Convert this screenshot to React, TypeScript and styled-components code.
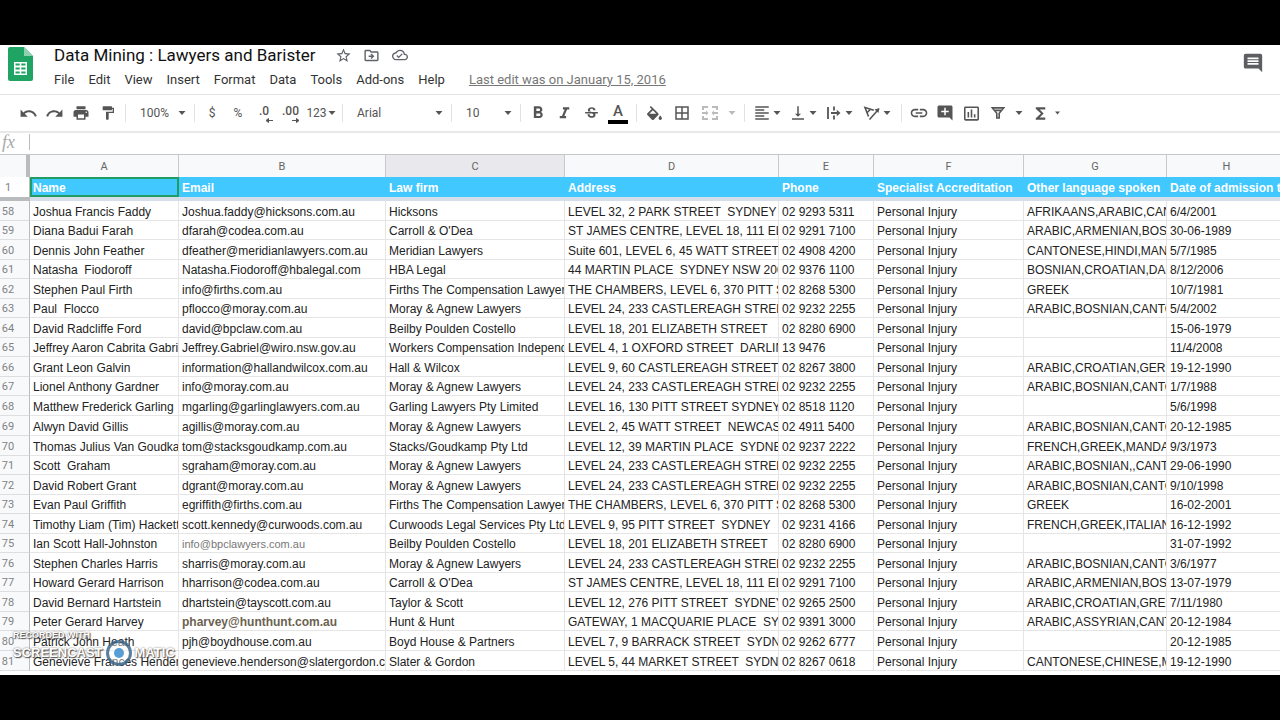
import React from "react";
import styled, { createGlobalStyle } from "styled-components";
import {
  MdUndo, MdRedo, MdPrint, MdFormatPaint, MdFormatBold, MdFormatItalic, MdStrikethroughS,
  MdBorderAll, MdFormatAlignLeft, MdVerticalAlignBottom, MdInsertLink, MdAddComment,
  MdInsertChartOutlined, MdFunctions, MdComment, MdStarBorder, MdOutlineDriveFileMove, MdOutlineCloudDone,
} from "react-icons/md";

const Global = createGlobalStyle`
  * { box-sizing: border-box; }
  body { margin: 0; background: #000; font-family: Roboto, "Liberation Sans", sans-serif; }
  button, select, input { font: inherit; color: inherit; border: 0; background: none; padding: 0; margin: 0; outline: none; }
`;

const Page = styled.div`
  min-height: 100vh;
  display: flex;
  flex-direction: column;
  padding: 45px 0;
  background: #000;
`;

const Workspace = styled.main`
  flex: 1;
  display: flex;
  flex-direction: column;
  background: #fff;
  overflow: hidden;
  position: relative;
`;

const Header = styled.header`
  display: flex;
  align-items: flex-start;
  height: 50px;
  padding: 0 16px 0 8px;
  border-bottom: 1px solid #e2e3e6;
`;

const Logo = styled.svg`
  width: 25px;
  height: 34px;
  margin-top: 2px;
  flex: none;
`;

const HeaderMain = styled.div`
  flex: 1;
  margin-left: 21px;
`;

const TitleRow = styled.div`
  display: flex;
  align-items: center;
  height: 20px;
  color: #5f6368;
`;

const Title = styled.h1`
  margin: 0 19px 0 0;
  font: 400 17px/20px Roboto, sans-serif;
  color: #111;
`;

const TitleButton = styled.button`
  display: flex;
  width: 18px;
  height: 18px;
  margin-right: 10px;
  align-items: center;
  justify-content: center;
`;

const Menu = styled.nav`
  display: flex;
  align-items: center;
  gap: 14px;
  height: 28px;
  font-size: 13px;
  color: #333;
`;

const LastEdit = styled.a`
  margin-left: 10px;
  color: #777;
  text-decoration: underline;
`;

const CommentButton = styled.button`
  display: flex;
  margin-top: 7px;
  color: #5c5e61;
`;

const Toolbar = styled.div`
  display: flex;
  align-items: center;
  height: 38px;
  padding-left: 15px;
  border-bottom: 2px solid #e9e9e9;
  color: #555;
  font-size: 12px;
`;

const Tool = styled.button<{ $w?: number; $dim?: boolean }>`
  display: flex;
  flex: none;
  align-items: center;
  justify-content: center;
  gap: 1px;
  width: ${(p) => p.$w ?? 26}px;
  height: 30px;
  color: ${(p) => (p.$dim ? "#bbb" : "inherit")};
`;

const DropTool = styled(Tool)`
  justify-content: flex-start;
  gap: 2px;
  padding-left: 4px;
`;

const Divider = styled.span`
  flex: none;
  width: 1px;
  height: 18px;
  margin: 0 4px;
  background: #e2e2e2;
`;

const Picker = styled.label<{ $w: number }>`
  position: relative;
  flex: none;
  width: ${(p) => p.$w}px;

  select {
    width: 100%;
    height: 30px;
    padding-left: 10px;
    appearance: none;
  }
  svg {
    position: absolute;
    right: 4px;
    top: 13px;
    pointer-events: none;
  }
`;

const Decimal = styled(Tool)`
  flex-direction: column;
  gap: 0;
  line-height: 14px;
  font-weight: 500;
  svg { margin-left: 10px; }
`;

const TextColor = styled(Tool)`
  flex-direction: column;
  gap: 0;
  font: 500 15px/17px Roboto, sans-serif;
  &::after {
    content: "";
    width: 20px;
    height: 4px;
    background: #000;
  }
`;

const FormulaBar = styled.label`
  display: flex;
  align-items: center;
  height: 21px;
  padding-bottom: 3px;
  font: italic 18px/18px "Liberation Serif", serif;
  color: #aaa;

  span { width: 29px; padding-left: 2px; }
  input {
    flex: 1;
    height: 16px;
    padding-left: 6px;
    border-left: 1px solid #bbb;
    font: 12px "Liberation Sans", Arial, sans-serif;
    color: #222;
  }
`;

const Sheet = styled.div`
  flex: 1;
  overflow: hidden;
  border-top: 1px solid #c4c6c8;
`;

const Grid = styled.table`
  width: 100%;
  min-width: 1287px;
  table-layout: fixed;
  border-collapse: separate;
  border-spacing: 0;
  font: 12px/16px "Liberation Sans", Arial, sans-serif;
  color: #222;

  tbody tr { height: 20px; }
  tbody tr:nth-child(even) { height: 19px; }
  tbody tr:nth-child(12n) { height: 20px; }
`;

const Letter = styled.th<{ $hover?: boolean }>`
  height: 22px;
  padding: 2px 0 0;
  border-right: 1px solid #c8cacc;
  background: ${(p) => (p.$hover ? "#e8e8ed" : "#f8f9fa")};
  font: 400 11px/18px Roboto, sans-serif;
  color: #666;
`;

const Corner = styled.td`
  padding: 0;
  border-right: 4px solid #b9bbbd;
  background: #f8f9fa;
`;

const RowNumber = styled.th<{ $frozen?: boolean }>`
  padding: 2px 13px 0 0;
  border-right: 1px solid #b9bbbd;
  border-bottom: ${(p) => (p.$frozen ? "4px solid #b9bbbd" : "1px solid #dcdee0")};
  background: ${(p) => (p.$frozen ? "#fff" : "#f8f9fa")};
  font: 400 11px/16px Roboto, sans-serif;
  color: #808386;
`;

const FieldName = styled.th<{ $active?: boolean }>`
  height: 24px;
  padding: 2px 3px 0;
  border-bottom: 4px solid #d6deea;
  background: #40c8ff;
  box-shadow: ${(p) => (p.$active ? "inset 0 0 0 2px #1f9d62" : "none")};
  font-weight: 700;
  text-align: left;
  white-space: nowrap;
  overflow: hidden;
  color: #fff;
`;

const Cell = styled.td<{ $look?: "faded" | "strong" }>`
  padding: 2px 0 0 3px;
  border-right: 1px solid #e5e5e5;
  border-bottom: 1px solid #e5e5e5;
  white-space: pre;
  overflow: hidden;
  font-size: ${(p) => (p.$look === "faded" ? 11 : 12)}px;
  font-weight: ${(p) => (p.$look === "strong" ? 700 : 400)};
  color: ${(p) => (p.$look === "faded" ? "#777" : p.$look === "strong" ? "#6b6250" : "inherit")};
`;

const Watermark = styled.div`
  position: absolute;
  left: 13px;
  bottom: 8px;
  opacity: 0.85;
  color: #fff;
  font-family: "Liberation Sans", Arial, sans-serif;
  font-weight: 700;
  text-shadow: 1px 1px 1px #333, 0 0 2px #555;
`;

const WatermarkTop = styled.div`
  font-size: 9px;
  line-height: 8px;
`;

const WatermarkName = styled.div`
  display: flex;
  align-items: center;
  gap: 2px;
  font-size: 13px;
  line-height: 28px;
`;

const Caret = ({ small }: { small?: boolean }) => (
  <svg width={8} height={4} viewBox="0 0 8 4" fill="currentColor" aria-hidden="true">
    <path d={small ? "M2 0.5h5L4.500 3.500z" : "M0.500 0h7L4 4z"} />
  </svg>
);

const Arrow = ({ right }: { right?: boolean }) => (
  <svg width={8} height={5} viewBox="0 0 8 5" aria-hidden="true">
    <path d={right ? "M0 2.500h6M4.500 0.500l2.500 2-2.500 2z" : "M8 2.500H2M3.500 0.500L1 2.500l2.500 2z"} fill="currentColor" stroke="currentColor" />
  </svg>
);

const FillIcon = () => (
  <svg width={15} height={14} viewBox="3 0 18 17" fill="currentColor" aria-hidden="true">
    <path d="M16.560 8.940L7.620 0 6.210 1.410l2.380 2.380-5.150 5.150a1.490 1.490 0 0 0 0 2.120l5.500 5.500c.29.29.68.44 1.060.44s.77-.15 1.060-.44l5.500-5.500c.59-.58.59-1.530 0-2.120zM5.800 9.400L10 5.210l4.200 4.190zM19 11.500s-2 2.170-2 3.500c0 1.100.9 2 2 2s2-.9 2-2c0-1.330-2-3.500-2-3.500z" />
  </svg>
);

const MergeIcon = () => (
  <svg width={16} height={14} viewBox="0 0 16 14" fill="none" stroke="currentColor" strokeWidth={2} aria-hidden="true">
    <path d="M1 4V1h5M10 1h5v3M1 10v3h5M10 13h5v-3M0 7h5M11 7h5" />
    <path d="M4 4.500L6.500 7 4 9.500zM12 4.500L9.500 7 12 9.500z" fill="currentColor" stroke="none" />
  </svg>
);

const OverflowIcon = () => (
  <svg width={18} height={18} viewBox="0 0 18 18" fill="none" stroke="currentColor" strokeWidth={1.8} aria-hidden="true">
    <path d="M3 3v12M9 2.500v4M9 11.500v4M6 9h7" />
    <path d="M11.800 5.800L15.500 9l-3.700 3.200z" fill="currentColor" stroke="none" />
  </svg>
);

const RotateIcon = () => (
  <svg width={18} height={18} viewBox="0 0 18 18" fill="none" stroke="currentColor" strokeWidth={1.6} aria-hidden="true">
    <path d="M6.500 15.500L14.500 6.500" />
    <path d="M11.500 5.500L16.500 4l-1 5z" fill="currentColor" stroke="none" />
    <path d="M5.500 12.500L2 3.500l8.800 2.800M4 8.800L7.500 5.200" />
  </svg>
);

const FilterIcon = () => (
  <svg width={14} height={12} viewBox="0 0 14 12" fill="none" stroke="currentColor" strokeWidth={1.6} aria-hidden="true">
    <path d="M1.300 0.900h11.400L8.200 6.300V11H5.800V6.300zM3.500 3.400h7" />
  </svg>
);

const fields = ["Name", "Email", "Law firm", "Address", "Phone", "Specialist Accreditation", "Other language spoken", "Date of admission to practice"];
const widths = [30, 149, 207, 179, 214, 95, 150, 143];

const castlereagh = "LEVEL 24, 233 CASTLEREAGH STREET  SYDNEY";
const stJames = "ST JAMES CENTRE, LEVEL 18, 111 ELIZABETH STREET";
const chambers = "THE CHAMBERS, LEVEL 6, 370 PITT STREET";
const bosnian = "ARABIC,BOSNIAN,CANTONESE";

const people: string[][] = [
  ["Joshua Francis Faddy", "Joshua.faddy@hicksons.com.au", "Hicksons", "LEVEL 32, 2 PARK STREET  SYDNEY NSW", "02 9293 5311", "AFRIKAANS,ARABIC,CANTONESE", "6/4/2001"],
  ["Diana Badui Farah", "dfarah@codea.com.au", "Carroll & O'Dea", stJames, "02 9291 7100", "ARABIC,ARMENIAN,BOSNIAN", "30-06-1989"],
  ["Dennis John Feather", "dfeather@meridianlawyers.com.au", "Meridian Lawyers", "Suite 601, LEVEL 6, 45 WATT STREET", "02 4908 4200", "CANTONESE,HINDI,MANDARIN", "5/7/1985"],
  ["Natasha  Fiodoroff", "Natasha.Fiodoroff@hbalegal.com", "HBA Legal", "44 MARTIN PLACE  SYDNEY NSW 2000", "02 9376 1100", "BOSNIAN,CROATIAN,DARI", "8/12/2006"],
  ["Stephen Paul Firth", "info@firths.com.au", "Firths The Compensation Lawyers", chambers, "02 8268 5300", "GREEK", "10/7/1981"],
  ["Paul  Flocco", "pflocco@moray.com.au", "Moray & Agnew Lawyers", castlereagh, "02 9232 2255", bosnian, "5/4/2002"],
  ["David Radcliffe Ford", "david@bpclaw.com.au", "Beilby Poulden Costello", "LEVEL 18, 201 ELIZABETH STREET", "02 8280 6900", "", "15-06-1979"],
  ["Jeffrey Aaron Cabrita Gabriel", "Jeffrey.Gabriel@wiro.nsw.gov.au", "Workers Compensation Independent", "LEVEL 4, 1 OXFORD STREET  DARLINGHURST", "13 9476", "", "11/4/2008"],
  ["Grant Leon Galvin", "information@hallandwilcox.com.au", "Hall & Wilcox", "LEVEL 9, 60 CASTLEREAGH STREET", "02 8267 3800", "ARABIC,CROATIAN,GERMAN", "19-12-1990"],
  ["Lionel Anthony Gardner", "info@moray.com.au", "Moray & Agnew Lawyers", castlereagh, "02 9232 2255", bosnian, "1/7/1988"],
  ["Matthew Frederick Garling", "mgarling@garlinglawyers.com.au", "Garling Lawyers Pty Limited", "LEVEL 16, 130 PITT STREET SYDNEY", "02 8518 1120", "", "5/6/1998"],
  ["Alwyn David Gillis", "agillis@moray.com.au", "Moray & Agnew Lawyers", "LEVEL 2, 45 WATT STREET  NEWCASTLE", "02 4911 5400", bosnian, "20-12-1985"],
  ["Thomas Julius Van Goudkamp", "tom@stacksgoudkamp.com.au", "Stacks/Goudkamp Pty Ltd", "LEVEL 12, 39 MARTIN PLACE  SYDNEY", "02 9237 2222", "FRENCH,GREEK,MANDARIN", "9/3/1973"],
  ["Scott  Graham", "sgraham@moray.com.au", "Moray & Agnew Lawyers", castlereagh, "02 9232 2255", "ARABIC,BOSNIAN,,CANTONESE", "29-06-1990"],
  ["David Robert Grant", "dgrant@moray.com.au", "Moray & Agnew Lawyers", castlereagh, "02 9232 2255", bosnian, "9/10/1998"],
  ["Evan Paul Griffith", "egriffith@firths.com.au", "Firths The Compensation Lawyers", chambers, "02 8268 5300", "GREEK", "16-02-2001"],
  ["Timothy Liam (Tim) Hackett", "scott.kennedy@curwoods.com.au", "Curwoods Legal Services Pty Ltd", "LEVEL 9, 95 PITT STREET  SYDNEY", "02 9231 4166", "FRENCH,GREEK,ITALIAN", "16-12-1992"],
  ["Ian Scott Hall-Johnston", "info@bpclawyers.com.au", "Beilby Poulden Costello", "LEVEL 18, 201 ELIZABETH STREET", "02 8280 6900", "", "31-07-1992"],
  ["Stephen Charles Harris", "sharris@moray.com.au", "Moray & Agnew Lawyers", castlereagh, "02 9232 2255", bosnian, "3/6/1977"],
  ["Howard Gerard Harrison", "hharrison@codea.com.au", "Carroll & O'Dea", stJames, "02 9291 7100", "ARABIC,ARMENIAN,BOSNIAN", "13-07-1979"],
  ["David Bernard Hartstein", "dhartstein@tayscott.com.au", "Taylor & Scott", "LEVEL 12, 276 PITT STREET  SYDNEY", "02 9265 2500", "ARABIC,CROATIAN,GREEK", "7/11/1980"],
  ["Peter Gerard Harvey", "pharvey@hunthunt.com.au", "Hunt & Hunt", "GATEWAY, 1 MACQUARIE PLACE  SYDNEY", "02 9391 3000", "ARABIC,ASSYRIAN,CANTONESE", "20-12-1984"],
  ["Patrick John Heath", "pjh@boydhouse.com.au", "Boyd House & Partners", "LEVEL 7, 9 BARRACK STREET  SYDNEY", "02 9262 6777", "", "20-12-1985"],
  ["Genevieve Frances Henderson", "genevieve.henderson@slatergordon.com.au", "Slater & Gordon", "LEVEL 5, 44 MARKET STREET  SYDNEY", "02 8267 0618", "CANTONESE,CHINESE,MANDARIN", "19-12-1990"],
];

const lookOf = (text: string) =>
  text.startsWith("info@bpc") ? "faded" : text.startsWith("pharvey") ? "strong" : undefined;

export default function App() {
  return (
    <Page>
      <Global />
      <Workspace>
        <Header>
          <Logo viewBox="0 0 25 34" aria-label="Sheets">
            <path d="M2 0h14l9 9v23a2 2 0 0 1-2 2H2a2 2 0 0 1-2-2V2a2 2 0 0 1 2-2z" fill="#1fa463" />
            <path d="M16 0l9 9h-9z" fill="#8ed1b1" />
            <path d="M6 15h13v13H6z" fill="#fff" />
            <path d="M7.500 17.500h4.200M13.300 17.500h4.200M7.500 21.500h4.200M13.300 21.500h4.200M7.500 25.500h4.200M13.300 25.500h4.200" stroke="#1fa463" strokeWidth="2" />
          </Logo>
          <HeaderMain>
            <TitleRow>
              <Title>Data Mining : Lawyers and Barister</Title>
              <TitleButton aria-label="Star"><MdStarBorder size={17} /></TitleButton>
              <TitleButton aria-label="Move"><MdOutlineDriveFileMove size={17} /></TitleButton>
              <TitleButton aria-label="Saved to Drive"><MdOutlineCloudDone size={16} /></TitleButton>
            </TitleRow>
            <Menu>
              {["File", "Edit", "View", "Insert", "Format", "Data", "Tools", "Add-ons", "Help"].map((m) => (
                <button key={m}>{m}</button>
              ))}
              <LastEdit href="#history">Last edit was on January 15, 2016</LastEdit>
            </Menu>
          </HeaderMain>
          <CommentButton aria-label="Comments"><MdComment size={22} /></CommentButton>
        </Header>

        <Toolbar role="toolbar">
          <Tool aria-label="Undo"><MdUndo size={19} /></Tool>
          <Tool aria-label="Redo"><MdRedo size={19} /></Tool>
          <Tool $w={27} aria-label="Print"><MdPrint size={18} /></Tool>
          <Tool $w={27} aria-label="Paint format"><MdFormatPaint size={16} /></Tool>
          <Divider />
          <Picker $w={60}><select aria-label="Zoom"><option>100%</option></select><Caret /></Picker>
          <Divider />
          <Tool>$</Tool>
          <Tool>%</Tool>
          <Decimal aria-label="Decrease decimal places">.0<Arrow /></Decimal>
          <Decimal $w={27} aria-label="Increase decimal places">.00<Arrow right /></Decimal>
          <Tool $w={34}>123<Caret /></Tool>
          <Divider />
          <Picker $w={100}><select aria-label="Font"><option>Arial</option></select><Caret /></Picker>
          <Divider />
          <Picker $w={60}><select aria-label="Font size"><option>10</option></select><Caret /></Picker>
          <Divider />
          <Tool aria-label="Bold"><MdFormatBold size={20} /></Tool>
          <Tool $w={27} aria-label="Italic"><MdFormatItalic size={19} /></Tool>
          <Tool aria-label="Strikethrough"><MdStrikethroughS size={17} /></Tool>
          <TextColor $w={28} aria-label="Text color">A</TextColor>
          <Divider />
          <Tool $w={27} aria-label="Fill color"><FillIcon /></Tool>
          <Tool $w={28} aria-label="Borders"><MdBorderAll size={18} /></Tool>
          <Tool $w={28} $dim aria-label="Merge cells"><MergeIcon /></Tool>
          <Tool $w={16} $dim aria-label="Merge type"><Caret /></Tool>
          <Divider />
          <DropTool $w={36} aria-label="Horizontal align"><MdFormatAlignLeft size={18} /><Caret /></DropTool>
          <DropTool $w={36} aria-label="Vertical align"><MdVerticalAlignBottom size={18} /><Caret /></DropTool>
          <DropTool $w={38} aria-label="Text wrapping"><OverflowIcon /><Caret /></DropTool>
          <DropTool $w={38} aria-label="Text rotation"><RotateIcon /><Caret /></DropTool>
          <Divider />
          <Tool aria-label="Insert link"><MdInsertLink size={20} /></Tool>
          <Tool aria-label="Insert comment"><MdAddComment size={18} /></Tool>
          <Tool aria-label="Insert chart"><MdInsertChartOutlined size={19} /></Tool>
          <Tool $w={27} aria-label="Filter"><FilterIcon /></Tool>
          <Tool $w={16} aria-label="Filter views"><Caret /></Tool>
          <Tool aria-label="Functions"><MdFunctions size={19} /></Tool>
          <Tool $w={8} aria-label="More functions"><Caret small /></Tool>
        </Toolbar>

        <FormulaBar><span>fx</span><input aria-label="Formula" /></FormulaBar>

        <Sheet>
          <Grid>
            <colgroup>
              {widths.map((w, i) => <col key={i} width={w} />)}
              <col />
            </colgroup>
            <thead>
              <tr>
                <Corner />
                {"ABCDEFGH".split("").map((l) => <Letter key={l} $hover={l === "C"} scope="col">{l}</Letter>)}
              </tr>
              <tr>
                <RowNumber $frozen scope="row">1</RowNumber>
                {fields.map((f, i) => <FieldName key={f} $active={i === 0} scope="col">{f}</FieldName>)}
              </tr>
            </thead>
            <tbody>
              {people.map((p, i) => (
                <tr key={i}>
                  <RowNumber scope="row">{58 + i}</RowNumber>
                  {[...p.slice(0, 5), "Personal Injury", ...p.slice(5)].map((t, j) => (
                    <Cell key={j} $look={lookOf(t)}>{t}</Cell>
                  ))}
                </tr>
              ))}
            </tbody>
          </Grid>
        </Sheet>

        <Watermark>
          <WatermarkTop>RECORDED WITH</WatermarkTop>
          <WatermarkName>
            SCREENCAST
            <svg width={28} height={28} viewBox="0 0 28 28" aria-hidden="true">
              <circle cx="14" cy="14" r="11.500" fill="#fff" fillOpacity="0.500" stroke="#3f6a8c" strokeWidth="3" />
              <circle cx="14" cy="14" r="5" fill="#3d8fd0" />
            </svg>
            MATIC
          </WatermarkName>
        </Watermark>
      </Workspace>
    </Page>
  );
}
